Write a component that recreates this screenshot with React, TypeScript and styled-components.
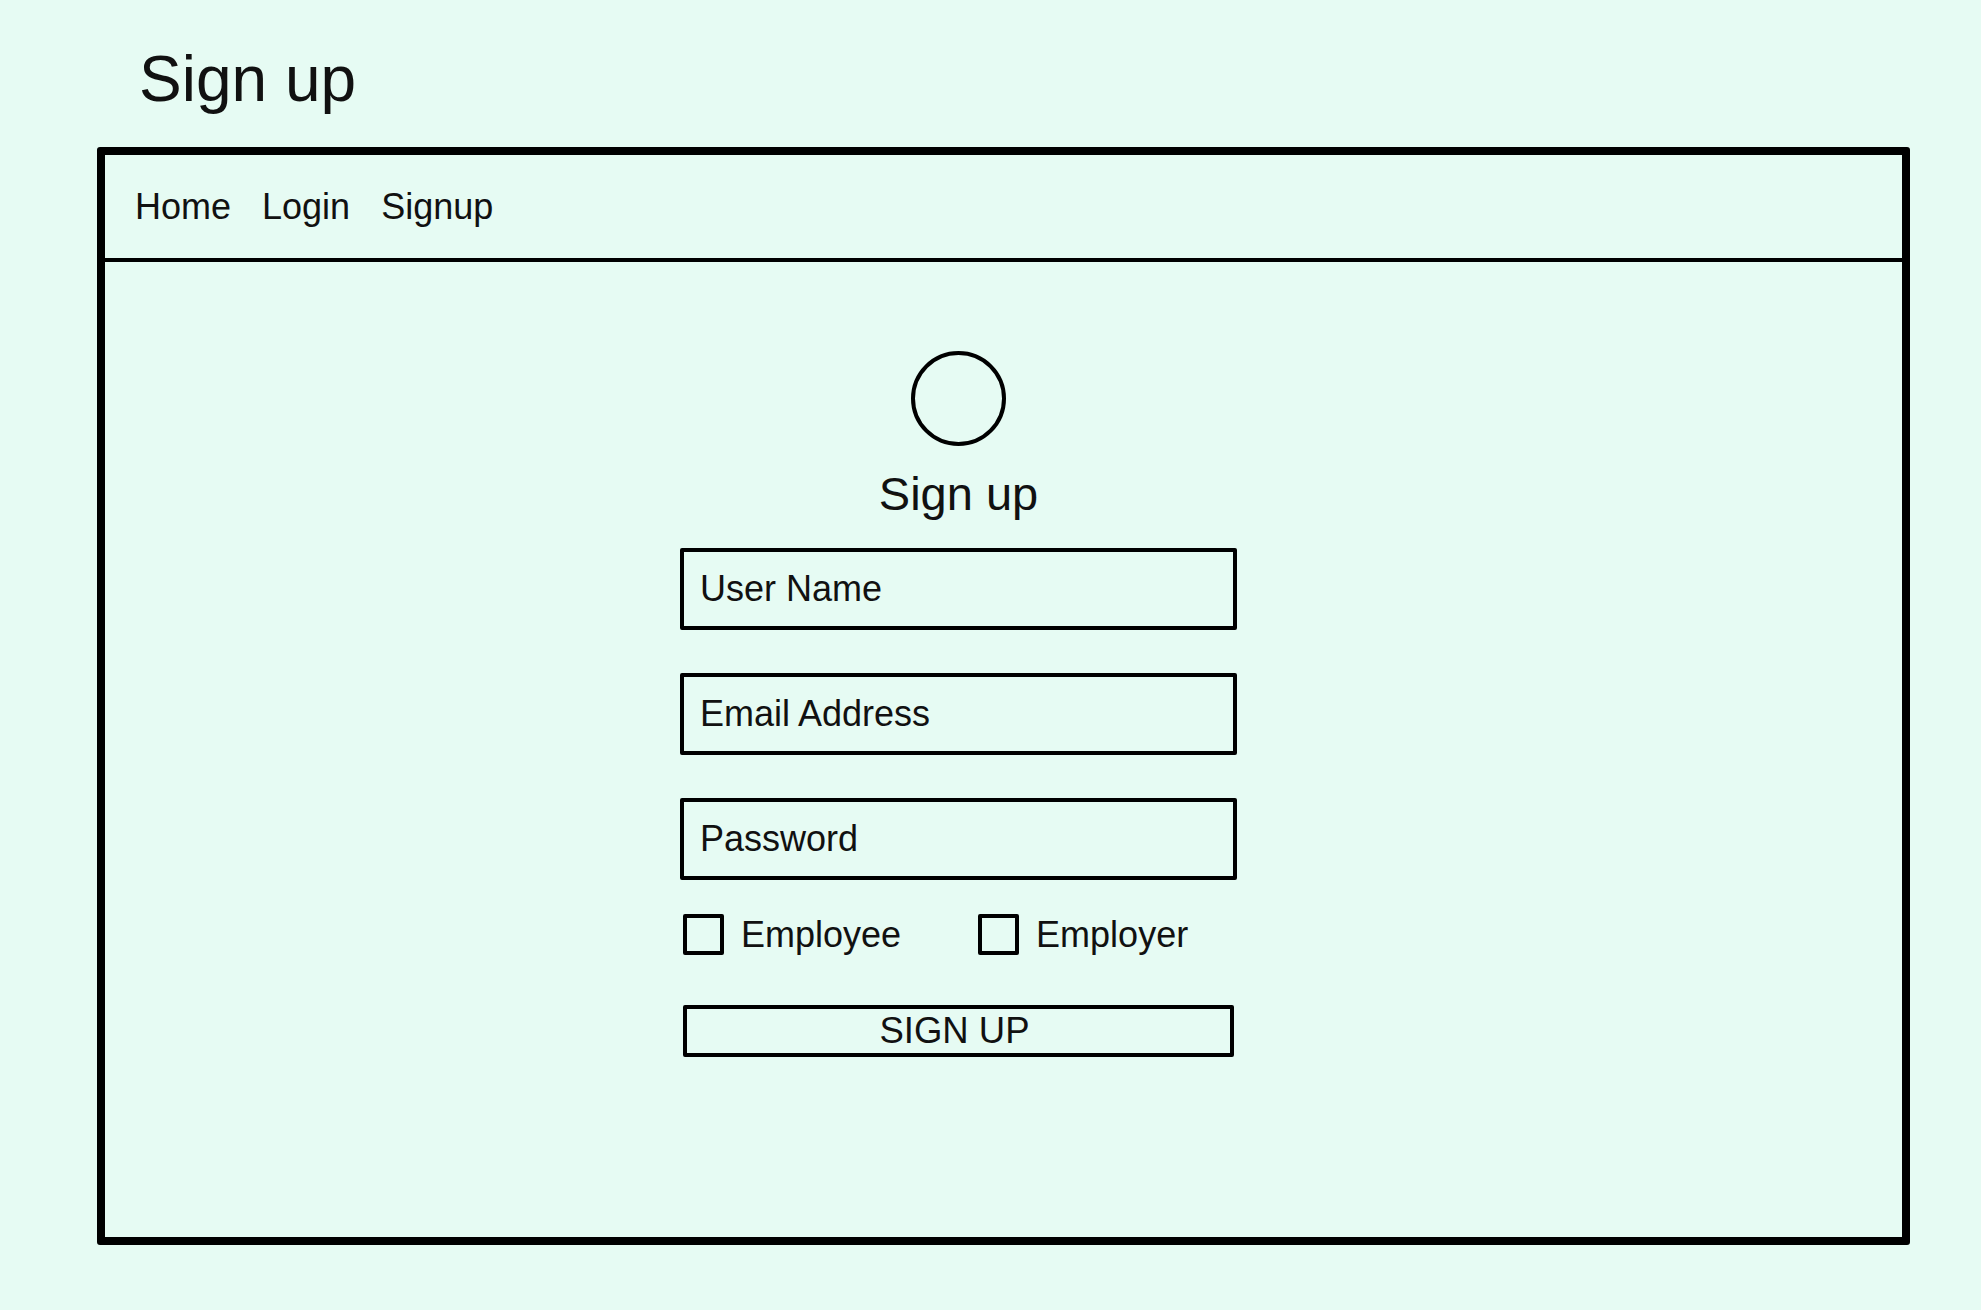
import React from "react";
import styled, { createGlobalStyle } from "styled-components";

const Global = createGlobalStyle`
  html, body {
    margin: 0;
    padding: 0;
    background: #e6fbf3;
  }
  body {
    font-family: "Liberation Sans", Arial, sans-serif;
    color: #111;
  }
  * { box-sizing: border-box; }
`;

const Page = styled.div`
  width: 1981px;
  height: 1310px;
  background: #e6fbf3;
  padding-top: 47px;
  padding-left: 97px;
  display: flex;
  flex-direction: column;
`;

const PageTitle = styled.h1`
  margin: 0 0 36px 42px;
  font-size: 64px;
  line-height: 64px;
  font-weight: 400;
`;

const Frame = styled.div`
  width: 1813px;
  height: 1098px;
  border: 8px solid #000;
  border-radius: 3px;
  display: flex;
  flex-direction: column;
`;

const NavBar = styled.nav`
  height: 107px;
  border-bottom: 4px solid #000;
  display: flex;
  align-items: center;
  gap: 31px;
  padding-left: 30px;
`;

const NavLink = styled.a`
  font-size: 36px;
  line-height: 36px;
  color: #111;
  text-decoration: none;
`;

const Body = styled.main`
  flex: 1;
  display: flex;
  flex-direction: column;
  align-items: center;
  padding-top: 89px;
  padding-right: 90px;
`;

const Avatar = styled.div`
  width: 95px;
  height: 95px;
  border: 4px solid #000;
  border-radius: 50%;
`;

const FormTitle = styled.h2`
  margin: 24px 0 31px;
  font-size: 47px;
  line-height: 47px;
  font-weight: 400;
`;

const Fields = styled.div`
  display: flex;
  flex-direction: column;
  gap: 43px;
`;

const Field = styled.div`
  width: 557px;
  height: 82px;
  border: 4px solid #000;
  border-radius: 2px;
  display: flex;
  align-items: center;
  padding-left: 16px;
  font-size: 36px;
  color: #111;
`;

const CheckRow = styled.div`
  width: 551px;
  margin-top: 34px;
  display: flex;
  align-items: center;
  gap: 77px;
`;

const CheckItem = styled.label`
  display: flex;
  align-items: center;
  gap: 17px;
  font-size: 36px;
  line-height: 41px;
`;

const Box = styled.span`
  width: 41px;
  height: 41px;
  border: 4px solid #000;
  border-radius: 2px;
`;

const SubmitButton = styled.button`
  margin-top: 50px;
  width: 551px;
  height: 52px;
  border: 4px solid #000;
  border-radius: 2px;
  background: transparent;
  font-family: "Liberation Sans", Arial, sans-serif;
  font-size: 36.5px;
  color: #111;
  padding: 0 8px 0 0;
  display: flex;
  align-items: center;
  justify-content: center;
`;

export default function App() {
  return (
    <>
      <Global />
      <Page>
        <PageTitle>Sign up</PageTitle>
        <Frame>
          <NavBar>
            <NavLink>Home</NavLink>
            <NavLink>Login</NavLink>
            <NavLink>Signup</NavLink>
          </NavBar>
          <Body>
            <Avatar />
            <FormTitle>Sign up</FormTitle>
            <Fields>
              <Field>User Name</Field>
              <Field>Email Address</Field>
              <Field>Password</Field>
            </Fields>
            <CheckRow>
              <CheckItem>
                <Box />
                Employee
              </CheckItem>
              <CheckItem>
                <Box />
                Employer
              </CheckItem>
            </CheckRow>
            <SubmitButton>SIGN UP</SubmitButton>
          </Body>
        </Frame>
      </Page>
    </>
  );
}
